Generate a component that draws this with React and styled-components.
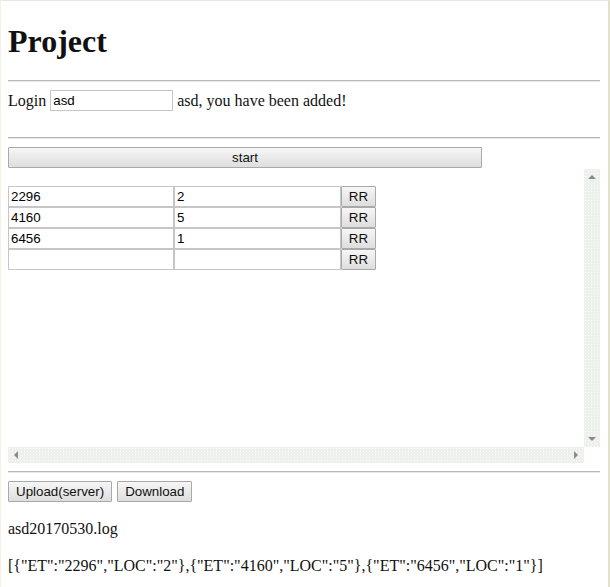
import React from "react";
import styled, { createGlobalStyle } from "styled-components";

const rows = [
  { et: "2296", loc: "2" },
  { et: "4160", loc: "5" },
  { et: "6456", loc: "1" },
  { et: "", loc: "" },
];

const arrows = {
  up: "4,10 12,10 8,6",
  down: "4,6 12,6 8,10",
  left: "10,4 10,12 6,8",
  right: "6,4 6,12 10,8",
};

const Arrow = ({ dir }) => (
  <ArrowBox viewBox="0 0 16 16" width="16" height="16">
    <polygon points={arrows[dir]} fill="#8a8a8a" />
  </ArrowBox>
);

const App = () => {
  const saved = rows
    .filter((r) => r.et !== "")
    .map((r) => ({ ET: r.et, LOC: r.loc }));

  return (
    <Frame>
      <GlobalStyle />
      <Title>Project</Title>
      <Rule />
      <LoginRow>
        <span>Login</span>
        <TextInput defaultValue="asd" />
        <span>asd, you have been added!</span>
      </LoginRow>
      <Rule />
      <StartButton>start</StartButton>
      <ScrollArea>
        <Viewport>
          <Grid>
            {rows.map((r, i) => (
              <React.Fragment key={i}>
                <Cell defaultValue={r.et} />
                <Cell defaultValue={r.loc} />
                <CellButton>RR</CellButton>
              </React.Fragment>
            ))}
          </Grid>
        </Viewport>
        <Bar $vertical>
          <Arrow dir="up" />
          <Arrow dir="down" />
        </Bar>
        <Bar>
          <Arrow dir="left" />
          <Arrow dir="right" />
        </Bar>
        <Corner />
      </ScrollArea>
      <Rule />
      <Actions>
        <Button>Upload(server)</Button>
        <Button>Download</Button>
      </Actions>
      <Text>asd20170530.log</Text>
      <Text>{JSON.stringify(saved)}</Text>
    </Frame>
  );
};

const GlobalStyle = createGlobalStyle`
  body {
    margin: 0;
    background: #fff;
    font-family: "Liberation Serif", "Times New Roman", serif;
    font-size: 16px;
    color: #111;
  }
`;

const Frame = styled.div`
  box-sizing: border-box;
  width: 610px;
  min-height: 587px;
  padding: 7px 8px 0 7px;
  border-top: 1px solid #efe2e2;
  border-left: 1px solid #f3f1e6;
  border-right: 2px solid #e2e2cc;
`;

const Title = styled.h1`
  font-size: 32px;
  font-weight: bold;
  margin: 15px 0 20px;
`;

const Rule = styled.hr`
  margin: 8px 0;
  height: 0;
  border: 0;
  border-top: 1px solid #b8b8b8;
  border-bottom: 1px solid #e8e8e8;
`;

const LoginRow = styled.div`
  display: flex;
  align-items: center;
  gap: 4px;
  height: 21px;
  margin-bottom: 26px;
`;

const TextInput = styled.input`
  box-sizing: border-box;
  width: 123px;
  height: 21px;
  padding: 1px 2px;
  border: 1px solid #c6c6c6;
  font-family: "Liberation Sans", Arial, sans-serif;
  font-size: 13.33px;
  color: #000;
  outline: none;
`;

const Cell = styled(TextInput)`
  width: 100%;
`;

const Button = styled.button`
  box-sizing: border-box;
  height: 21px;
  padding: 0 7px;
  border: 1px solid #a9a9a9;
  border-radius: 1px;
  background: linear-gradient(#f6f6f6, #dedede);
  font-family: "Liberation Sans", Arial, sans-serif;
  font-size: 13.33px;
  color: #111;
`;

const CellButton = styled(Button)`
  padding: 0;
`;

const StartButton = styled(Button)`
  display: block;
  width: 474px;
`;

const ScrollArea = styled.div`
  display: grid;
  grid-template-columns: 1fr 16px;
  grid-template-rows: 1fr 16px;
  height: 294px;
  margin-top: 1px;
`;

const Viewport = styled.div`
  overflow: hidden;
  padding-top: 17px;
`;

const Bar = styled.div`
  display: flex;
  flex-direction: ${(p) => (p.$vertical ? "column" : "row")};
  justify-content: space-between;
  background-color: #eef0ee;
  background-image: radial-gradient(#fafbfa 0.8px, transparent 1px);
  background-size: 3px 3px;
`;

const ArrowBox = styled.svg`
  display: block;
  flex: none;
`;

const Corner = styled.div`
  background: #fff;
`;

const Grid = styled.div`
  display: grid;
  grid-template-columns: 166px 167px 35px;
  grid-auto-rows: 21px;
  width: 368px;
`;

const Actions = styled.div`
  display: flex;
  gap: 5px;
  margin-top: 8px;
`;

const Text = styled.p`
  margin: 16px 0;
  line-height: 21px;
`;

export default App;
